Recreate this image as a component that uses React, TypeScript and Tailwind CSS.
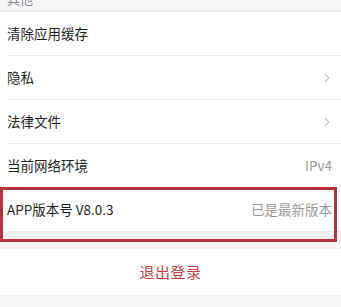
import { ChevronRight } from "lucide-react";

type Row = { label: string; value?: string; arrow?: boolean };

const rows: Row[] = [
  { label: "清除应用缓存" },
  { label: "隐私", arrow: true },
  { label: "法律文件", arrow: true },
  { label: "当前网络环境", value: "IPv4" },
  { label: "APP版本号 V8.0.3", value: "已是最新版本" },
];

function SettingRow({ row }: { row: Row }) {
  return (
    <div className="pl-[7px] bg-white">
      <div className="h-[44px] flex items-center justify-between pr-[9px] border-b border-[#ebebeb]">
        <span className="text-[13.5px] text-[#1f1f1f]">{row.label}</span>
        {row.value && (
          <span className="text-[13.5px] text-[#9a9a9a]">{row.value}</span>
        )}
        {row.arrow && (
          <ChevronRight size={14} strokeWidth={1.5} className="text-[#9c9c9c] -mr-[2px]" />
        )}
      </div>
    </div>
  );
}

export default function App() {
  return (
    <div
      className="relative w-[341px] h-[307px] overflow-hidden bg-[#f5f5f5]"
      style={{ fontFamily: '"Noto Sans CJK SC", "Noto Sans", sans-serif' }}
    >
      <div className="h-[12px] overflow-hidden border-b border-[#ebebeb]">
        <div className="-mt-[11px] pl-[7px] text-[13px] leading-[19px] text-[#8a8a8a]">其他</div>
      </div>
      {rows.map((r) => (
        <SettingRow key={r.label} row={r} />
      ))}
      <div className="mt-[16px] h-[48px] bg-white flex items-center justify-center border-y border-[#efefef]">
        <span className="text-[15px] tracking-[0.5px] text-[#c2433d]">退出登录</span>
      </div>

      {/* highlight annotation */}
      <div className="absolute left-0 top-[187px] w-[337px] h-[55px] border-[3px] border-[#b3343f] pointer-events-none" />
    </div>
  );
}
